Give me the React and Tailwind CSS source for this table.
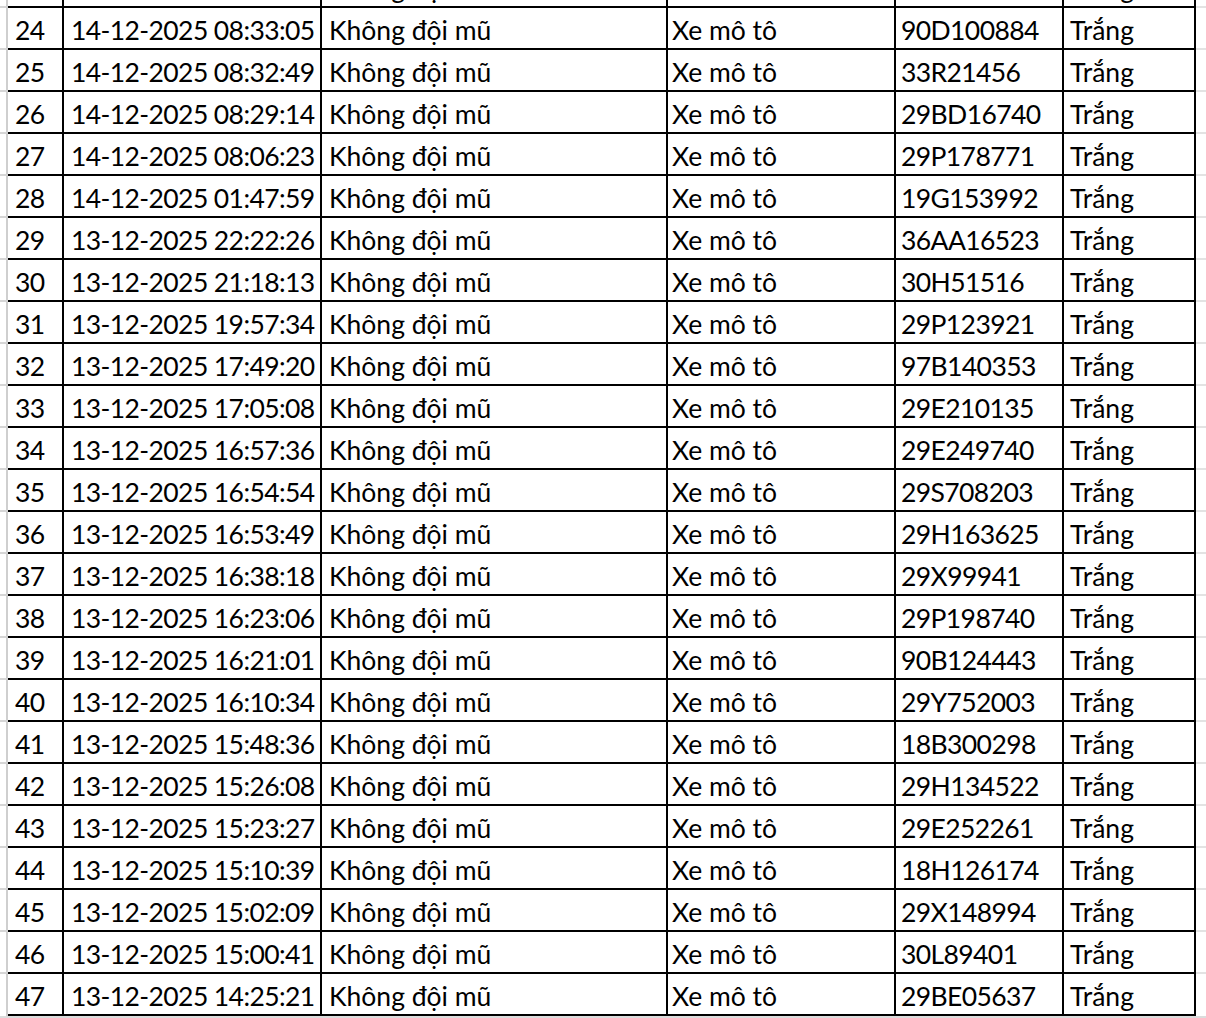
const rows = [
  [23, '14-12-2025 08:35:10', '29A123456'],
  [24, '14-12-2025 08:33:05', '90D100884'],
  [25, '14-12-2025 08:32:49', '33R21456'],
  [26, '14-12-2025 08:29:14', '29BD16740'],
  [27, '14-12-2025 08:06:23', '29P178771'],
  [28, '14-12-2025 01:47:59', '19G153992'],
  [29, '13-12-2025 22:22:26', '36AA16523'],
  [30, '13-12-2025 21:18:13', '30H51516'],
  [31, '13-12-2025 19:57:34', '29P123921'],
  [32, '13-12-2025 17:49:20', '97B140353'],
  [33, '13-12-2025 17:05:08', '29E210135'],
  [34, '13-12-2025 16:57:36', '29E249740'],
  [35, '13-12-2025 16:54:54', '29S708203'],
  [36, '13-12-2025 16:53:49', '29H163625'],
  [37, '13-12-2025 16:38:18', '29X99941'],
  [38, '13-12-2025 16:23:06', '29P198740'],
  [39, '13-12-2025 16:21:01', '90B124443'],
  [40, '13-12-2025 16:10:34', '29Y752003'],
  [41, '13-12-2025 15:48:36', '18B300298'],
  [42, '13-12-2025 15:26:08', '29H134522'],
  [43, '13-12-2025 15:23:27', '29E252261'],
  [44, '13-12-2025 15:10:39', '18H126174'],
  [45, '13-12-2025 15:02:09', '29X148994'],
  [46, '13-12-2025 15:00:41', '30L89401'],
  [47, '13-12-2025 14:25:21', '29BE05637'],
];

const cell = 'h-full border-r-2 border-black whitespace-nowrap overflow-hidden leading-[40px] pt-[2px]';

function Row({ num, time, plate }) {
  return (
    <div className="flex h-[42px] shrink-0">
      <div className="w-[8px] shrink-0 border-r-2 border-t-2 border-r-[#cfcfcf] border-t-[#d6d6d6]" />
      <div className="flex shrink-0 border-t-2 border-black">
        <div className={`${cell} w-[56px] pl-[7px] tracking-[-0.5px]`}>{num}</div>
        <div className={`${cell} w-[258px] pl-[7px] tracking-[-0.6px]`}>{time}</div>
        <div className={`${cell} w-[346px] pl-[7px]`}>Không đội mũ</div>
        <div className={`${cell} w-[228px] pl-[4px]`}>Xe mô tô</div>
        <div className={`${cell} w-[168px] pl-[5px] tracking-[-0.6px]`}>{plate}</div>
        <div className={`${cell} w-[132px] pl-[6px]`}>Trắng</div>
      </div>
      <div className="flex-1 border-t-2 border-[#e3e3e3]" />
    </div>
  );
}

export default function App() {
  return (
    <div className="w-[1206px] h-[1018px] overflow-hidden bg-white text-black text-[26.5px] font-['Lato',sans-serif]">
      <div className="flex flex-col -mt-[36px]">
        {rows.map(([num, time, plate]) => (
          <Row key={num} num={num} time={time} plate={plate} />
        ))}
        <div className="flex h-[2px]">
          <div className="w-[8px] border-r-2 border-[#cfcfcf]" />
          <div className="w-[1188px] bg-black" />
        </div>
        <div className="h-[3px] bg-[#dcdcdc]" />
      </div>
    </div>
  );
}
